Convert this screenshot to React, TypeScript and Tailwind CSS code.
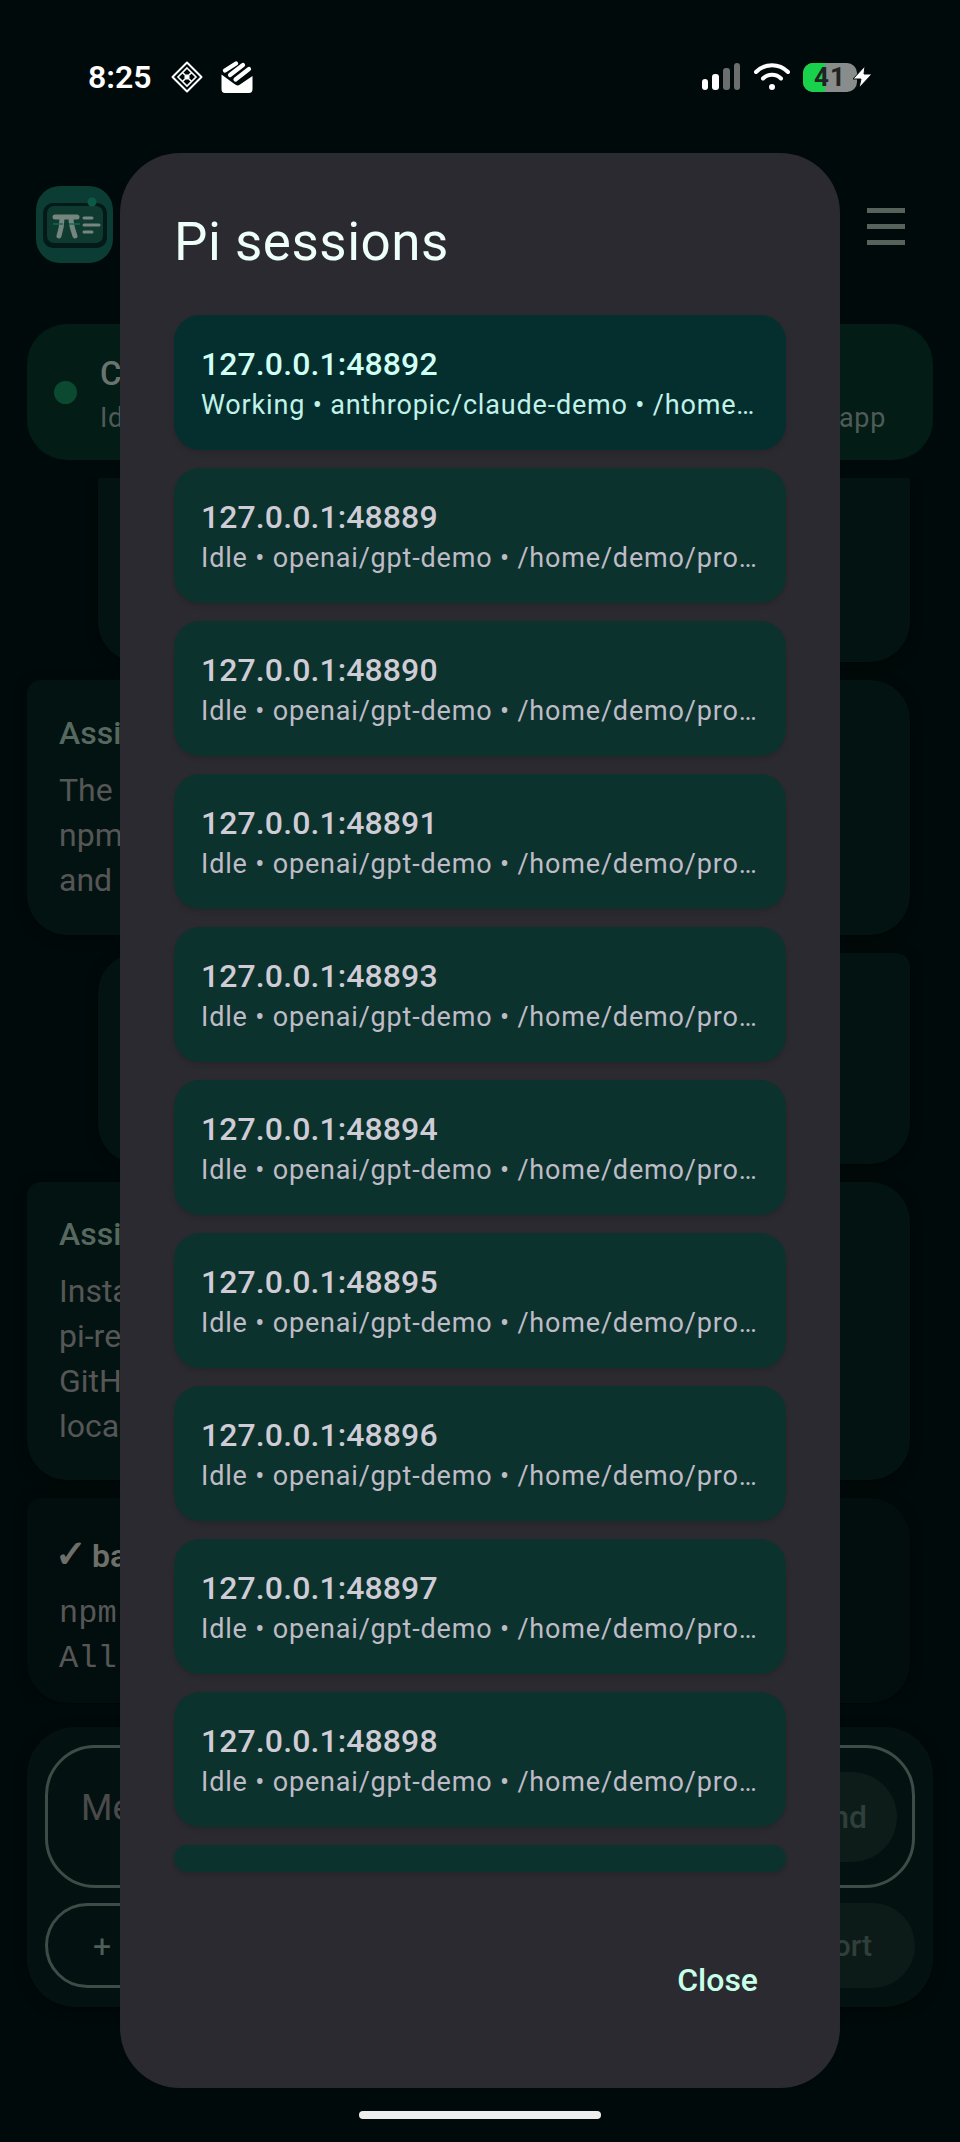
const sessions = [
  { port: 48892, status: 'Working', model: 'anthropic/claude-demo', path: '/home/demo/projects/demo-app', active: true },
  { port: 48889, status: 'Idle', model: 'openai/gpt-demo', path: '/home/demo/projects/demo-app' },
  { port: 48890, status: 'Idle', model: 'openai/gpt-demo', path: '/home/demo/projects/demo-app' },
  { port: 48891, status: 'Idle', model: 'openai/gpt-demo', path: '/home/demo/projects/demo-app' },
  { port: 48893, status: 'Idle', model: 'openai/gpt-demo', path: '/home/demo/projects/demo-app' },
  { port: 48894, status: 'Idle', model: 'openai/gpt-demo', path: '/home/demo/projects/demo-app' },
  { port: 48895, status: 'Idle', model: 'openai/gpt-demo', path: '/home/demo/projects/demo-app' },
  { port: 48896, status: 'Idle', model: 'openai/gpt-demo', path: '/home/demo/projects/demo-app' },
  { port: 48897, status: 'Idle', model: 'openai/gpt-demo', path: '/home/demo/projects/demo-app' },
  { port: 48898, status: 'Idle', model: 'openai/gpt-demo', path: '/home/demo/projects/demo-app' },
]

function StatusBar() {
  return (
    <div className="h-[153px] flex items-start justify-between pt-[61px] pl-[88px] pr-[88px]">
      <div className="flex items-center h-[32px]">
        <span className="text-[32px] leading-[32px] font-semibold text-white w-[83px]">8:25</span>
        <svg width="32" height="32" viewBox="0 0 32 32" fill="none" stroke="white">
          <path d="M16 1.5 L30.5 16 L16 30.5 L1.5 16 Z" strokeWidth="2" strokeLinejoin="round" />
          <path d="M16 7 L25 16 L16 25 L7 16 Z M11.5 11.5 L20.5 20.5 M20.5 11.5 L11.5 20.5" strokeWidth="1.6" />
          <path d="M13 16 L16 13 L19 16 L16 19 Z" fill="white" stroke="none" />
        </svg>
        <svg className="ml-[18px]" width="32" height="32" viewBox="0 0 32 32" fill="none">
          <path d="M0.5 13.5 L10 20.5 Q13 22.5 15 24 Q17 25 19 23.5 L31.5 15 V28 Q31.5 32 28 32 H4 Q0.5 32 0.5 28 Z" fill="white" />
          <g stroke="white" strokeWidth="4.2" strokeLinecap="round">
            <path d="M4 9.5 L15 2.5" />
            <path d="M9 14 L22 4" />
            <path d="M14.5 18.5 L28 8" />
          </g>
        </svg>
      </div>
      <div className="flex items-center h-[32px]">
        <svg width="38" height="28" viewBox="0 0 38 28">
          <rect x="0" y="16" width="6" height="11" rx="3" fill="white" />
          <rect x="10" y="11" width="7" height="16" rx="3" fill="white" />
          <rect x="21" y="5" width="7" height="22" rx="3" fill="#6b6f6e" />
          <rect x="32" y="0" width="6" height="27" rx="3" fill="#6b6f6e" />
        </svg>
        <svg className="ml-[14px]" width="36" height="28" viewBox="0 0 36 28" fill="none" stroke="white" strokeLinecap="round" strokeWidth="4">
          <path d="M2 9 C11 0 25 0 34 9" />
          <path d="M9 15.5 C14 10.5 22 10.5 27 15.5" />
          <circle cx="18" cy="24" r="3" fill="white" stroke="none" />
        </svg>
        <div className="ml-[13px] relative w-[54px] h-[29px] rounded-[10px] overflow-hidden bg-[#888c8b] flex items-center justify-center">
          <div className="absolute left-0 top-0 bottom-0 w-[22px] bg-[#19d24c]" />
          <span className="relative text-[26px] leading-[29px] font-bold text-[#222] tracking-[1px]">41</span>
        </div>
        <svg className="ml-[-4px] mr-[-1px] relative" width="20" height="22" viewBox="0 0 20 22" fill="white">
          <path d="M12 0 L0 13 H8 L6 22 L19 8 H11 Z" stroke="#020b0b" strokeWidth="1" />
        </svg>
      </div>
    </div>
  )
}

function Logo() {
  return (
    <svg width="77" height="77" viewBox="0 0 77 77">
      <rect width="77" height="77" rx="24" fill="#0b3d34" />
      <rect x="7" y="17" width="64" height="45" rx="10" fill="#04191a" />
      <rect x="11" y="20" width="56" height="37" rx="7" fill="#0e3a2f" />
      <circle cx="56" cy="16" r="4.5" fill="#0c5a45" />
      <g stroke="#76857f" strokeLinecap="round" fill="none">
        <path d="M19 31 H41" strokeWidth="5" />
        <path d="M26 32 C26 39 25 44 23 50" strokeWidth="5" />
        <path d="M35 32 C35 39 37 44 39 50" strokeWidth="5" />
        <path d="M48 32 H56 M48 39 H63 M48 46 H56" strokeWidth="3" />
      </g>
      <path d="M17 38 H27 M33 38 H44" stroke="#0f6b52" strokeWidth="1.5" />
    </svg>
  )
}

function Backdrop() {
  return (
    <div className="flex flex-col font-['Roboto',sans-serif]">
      <StatusBar />
      <div className="h-[171px] flex items-start justify-between pt-[33px] pl-[36px] pr-[55px]">
        <Logo />
        <div className="flex flex-col gap-[11px] pt-[22px]">
          <div className="w-[38px] h-[5px] bg-[#56635d]" />
          <div className="w-[38px] h-[5px] bg-[#56635d]" />
          <div className="w-[38px] h-[5px] bg-[#56635d]" />
        </div>
      </div>

      <div className="mx-[27px] h-[136px] rounded-[40px] bg-[#041c16] flex items-center pl-[27px] pr-[47px] gap-[23px]">
        <div className="w-[23px] h-[23px] rounded-full bg-[#0b4a30] shrink-0" />
        <div className="flex-1 pt-[4px]">
          <div className="text-[33px] leading-[44px] font-medium text-[#6a736f]">Connected</div>
          <div className="mt-[4px] flex justify-between text-[27px] leading-[36px] tracking-[0.7px] text-[#4f5b56]">
            <span>Idle</span>
            <span>/home/demo/app</span>
          </div>
        </div>
      </div>

      <div className="h-[1226px] mt-[18px] overflow-hidden flex flex-col gap-[18px]">
        <div className="ml-[98px] mr-[50px] h-[184px] shrink-0 rounded-b-[40px] bg-[#031312] shadow-[0_2px_12px_rgba(0,0,0,0.5)]" />

        <div className="ml-[27px] mr-[50px] h-[255px] shrink-0 rounded-[40px] rounded-tl-[14px] bg-[#031312] shadow-[0_2px_12px_rgba(0,0,0,0.5)] pl-[32px] pt-[33px]">
          <div className="text-[32px] leading-[40px] font-medium text-[#56695f] mb-[15px]">Assistant</div>
          <div className="text-[32px] leading-[45px] text-[#565656]">
            <div>The</div>
            <div>npm</div>
            <div>and</div>
          </div>
        </div>

        <div className="ml-[98px] mr-[50px] h-[211px] shrink-0 rounded-[40px] rounded-tr-[14px] bg-[#031312] shadow-[0_2px_12px_rgba(0,0,0,0.5)]" />

        <div className="ml-[27px] mr-[50px] h-[298px] shrink-0 rounded-[40px] rounded-tl-[14px] bg-[#031312] shadow-[0_2px_12px_rgba(0,0,0,0.5)] pl-[32px] pt-[32px]">
          <div className="text-[32px] leading-[40px] font-medium text-[#56695f] mb-[15px]">Assistant</div>
          <div className="text-[32px] leading-[45px] text-[#565656]">
            <div>Install</div>
            <div>pi-remote</div>
            <div>GitHub</div>
            <div>local</div>
          </div>
        </div>

        <div className="ml-[27px] mr-[50px] h-[205px] shrink-0 rounded-[40px] rounded-tl-[14px] bg-[#020e0d] shadow-[0_2px_12px_rgba(0,0,0,0.5)] pl-[32px] pt-[36px]">
          <div className="text-[32px] leading-[40px] font-semibold text-[#6f6f6a] mb-[15px]"><span className="text-[38px] leading-[40px] ml-[-4px] mr-[-3px]">✓</span> bash</div>
          <div className="font-['Liberation_Mono',monospace] text-[32px] leading-[45px] text-[#565656]">
            <div>npm</div>
            <div>All</div>
          </div>
        </div>
      </div>

      <div className="mx-[27px] mt-[23px] h-[280px] rounded-[48px] bg-[#031210] shadow-[0_2px_12px_rgba(0,0,0,0.5)] p-[18px] flex flex-col gap-[15px]">
        <div className="h-[143px] rounded-[50px] border-[3px] border-[#3c4c46] flex items-center justify-between pl-[33px] pr-[15px]">
          <span className="text-[36px] text-[#4a4a4a] mb-[18px]">Message</span>
          <div className="h-[90px] w-[150px] rounded-full bg-[#0e1c19] flex items-center justify-end pr-[30px] text-[32px] font-medium text-[#2f3f3a]">Send</div>
        </div>
        <div className="flex justify-between">
          <div className="h-[85px] w-[300px] rounded-full border-[3px] border-[#3c4c46] pl-[45px] flex items-center text-[32px] text-[#4d5f58]">+ New</div>
          <div className="h-[85px] w-[300px] rounded-full bg-[#0d1b18] flex items-center justify-end pr-[43px] text-[30px] font-medium text-[#2f3f3a]">Abort</div>
        </div>
      </div>
    </div>
  )
}

function SessionRow({ port, status, model, path, active }: { port: number; status: string; model: string; path: string; active?: boolean }) {
  return (
    <div className={`h-[135px] shrink-0 rounded-[26px] pl-[27px] pr-[27px] pt-[27px] font-['Roboto',sans-serif] shadow-[0_3px_5px_rgba(0,0,0,0.12)] ${active ? 'bg-[#052e2e]' : 'bg-[#0c322d]'}`}>
      <div className={`text-[32px] leading-[44px] font-medium tracking-[0.1px] ${active ? 'text-[#d0fff4]' : 'text-[#cfccd6]'}`}>127.0.0.1:{port}</div>
      <div className={`mt-[1px] text-[27px] leading-[36px] tracking-[0.82px] truncate ${active ? 'text-[#c0f2e8]' : 'text-[#bfbbc7]'}`}>{status} • {model} • {path}</div>
    </div>
  )
}

export default function App() {
  return (
    <div className="relative w-[960px] h-[2142px] overflow-hidden bg-[#010a0a]">
      <Backdrop />

      <div className="absolute left-[120px] top-[153px] w-[720px] h-[1935px] rounded-[60px] bg-[#2b2a30] flex flex-col px-[54px] font-['Roboto',sans-serif]">
        <h2 className="text-[53px] leading-[70px] tracking-[0.5px] text-[#eefff9] mt-[54px] mb-[38px]">Pi sessions</h2>
        <div className="flex flex-col gap-[18px]">
          {sessions.map(s => <SessionRow key={s.port} {...s} />)}
          <div className="h-[27px] rounded-[13px] bg-[#0c322d] shadow-[0_3px_5px_rgba(0,0,0,0.12)]" />
        </div>
        <div className="flex justify-end mt-[88px] pr-[28px]">
          <span className="text-[32px] leading-[40px] font-medium text-[#c8ffe8]">Close</span>
        </div>
      </div>

      <div className="absolute left-[359px] top-[2111px] w-[242px] h-[8px] rounded-full bg-[#eeeeee]" />
    </div>
  )
}
